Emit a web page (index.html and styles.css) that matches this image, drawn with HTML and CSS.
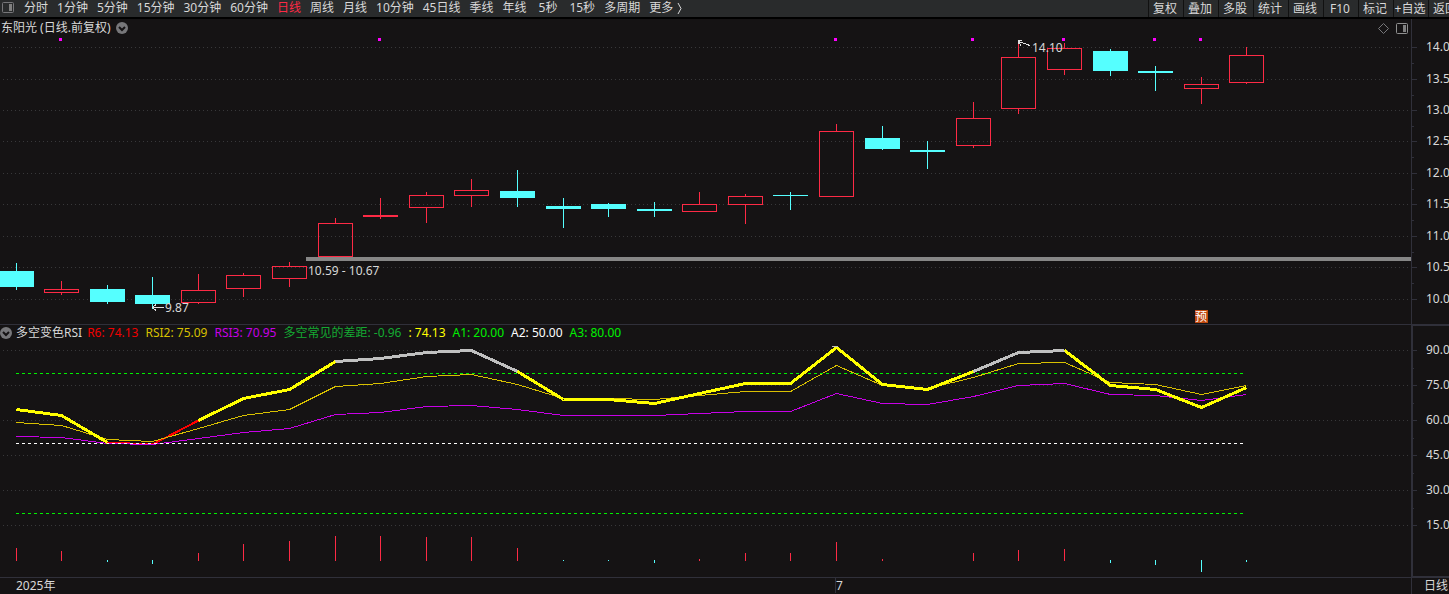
FILE: index.html
```html
<!DOCTYPE html>
<html lang="zh-CN">
<head>
    <meta charset="UTF-8">
    <meta name="viewport" content="width=device-width, initial-scale=1.0">
    <title>东阳光 日线</title>
    <link rel="stylesheet" href="styles.css">
</head>
<body>
    <header class="toolbar">
        <button class="icon-btn" aria-label="侧栏">
            <svg width="12" height="11" viewBox="0 0 12 11"><rect class="icon-line" x="0.5" y="0.5" width="11" height="10" rx="1"/><rect class="icon-fill" x="7" y="2" width="3" height="7"/></svg>
        </button>
        <nav class="periods">
            <button>分时</button>
            <button>1分钟</button>
            <button>5分钟</button>
            <button>15分钟</button>
            <button>30分钟</button>
            <button>60分钟</button>
            <button class="active">日线</button>
            <button>周线</button>
            <button>月线</button>
            <button>10分钟</button>
            <button>45日线</button>
            <button>季线</button>
            <button>年线</button>
            <button class="seconds">5秒</button>
            <button class="seconds">15秒</button>
            <button>多周期</button>
            <button>更多 <svg width="5" height="11" viewBox="0 0 5 11"><path class="more-line" d="M1 0L4 5.5L1 11"/></svg></button>
        </nav>
        <div class="tools">
            <button>复权</button>
            <button>叠加</button>
            <button>多股</button>
            <button>统计</button>
            <button>画线</button>
            <button>F10</button>
            <button>标记</button>
            <button>+自选</button>
            <button class="cut">返回</button>
        </div>
    </header>

    <main class="charts">
        <section class="panel price">
            <svg class="plot" id="pricePlot" viewBox="0 19 1411 305" preserveAspectRatio="xMinYMin meet"></svg>
            <div class="panel-head">
                <span>东阳光 (日线.前复权)</span>
                <button class="icon-btn" aria-label="展开">
                    <svg width="12" height="12" viewBox="0 0 12 12"><circle class="icon-disc" cx="6" cy="6" r="6"/><path class="chevron" d="M3 5L6 8L9 5"/></svg>
                </button>
                <div class="corner">
                    <button class="icon-btn" aria-label="标记点">
                        <svg width="11" height="11" viewBox="0 0 11 11"><path class="icon-line" d="M5.5 0.5L10.5 5.5L5.5 10.5L0.5 5.5Z"/></svg>
                    </button>
                    <button class="icon-btn" aria-label="右侧栏">
                        <svg width="12" height="11" viewBox="0 0 12 11"><rect class="icon-line bright" x="0.5" y="0.5" width="11" height="10" rx="1"/><rect class="icon-fill" x="7" y="2" width="3" height="7"/></svg>
                    </button>
                </div>
            </div>
        </section>
        <svg class="axis" id="priceAxis" viewBox="1411 19 38 305" preserveAspectRatio="xMinYMin meet"></svg>

        <section class="panel rsi">
            <svg class="plot" id="rsiPlot" viewBox="0 325 1411 252" preserveAspectRatio="xMinYMin meet"></svg>
            <div class="panel-head legend">
                <button class="icon-btn" aria-label="展开">
                    <svg width="12" height="12" viewBox="0 0 12 12"><circle class="icon-disc" cx="6" cy="6" r="6"/><path class="chevron" d="M3 5L6 8L9 5"/></svg>
                </button>
                <span>多空变色RSI</span>
                <div class="values">
                    <span class="c-red">R6: 74.13</span>
                    <span class="c-gold">RSI2: 75.09</span>
                    <span class="c-purple">RSI3: 70.95</span>
                    <span class="c-green">多空常见的差距: -0.96</span>
                    <span class="c-yellow">: 74.13</span>
                    <span class="c-lime">A1: 20.00</span>
                    <span class="c-white">A2: 50.00</span>
                    <span class="c-lime">A3: 80.00</span>
                </div>
            </div>
        </section>
        <svg class="axis" id="rsiAxis" viewBox="1411 324 38 254" preserveAspectRatio="xMinYMin meet"></svg>
    </main>

    <footer class="timeline">
        <svg class="dates" id="dates" viewBox="0 578 1411 16" preserveAspectRatio="xMinYMin meet"></svg>
        <span class="period-name">日线</span>
    </footer>

    <script src="script.js"></script>
</body>
</html>
```
FILE: styles.css
```css
* {
    box-sizing: border-box;
}

body {
    margin: 0;
    height: 100vh;
    display: flex;
    flex-direction: column;
    overflow: hidden;
    background: #151314;
    color: #d8d8d8;
    font: 12px/16px "Noto Sans", "Noto Sans CJK SC", sans-serif;
}

button {
    padding: 0;
    border: 0;
    background: none;
    color: inherit;
    font: inherit;
    white-space: nowrap;
    cursor: pointer;
}

button:hover {
    color: #ffffff;
}

svg {
    display: block;
}

/* toolbar */
.toolbar {
    display: flex;
    flex: none;
    height: 19px;
    padding-left: 2px;
    background: #292b2c;
    border-bottom: 2px solid #000000;
}

.icon-btn {
    display: flex;
    flex: none;
    align-items: center;
}

.toolbar .icon-btn {
    height: 15px;
}

.periods {
    display: flex;
    flex: 1;
    gap: 9px;
    padding-left: 10px;
    height: 16px;
}

.periods button {
    display: flex;
    align-items: center;
    gap: 4px;
    line-height: 16px;
}

.periods .seconds {
    padding-left: 3px;
}

.periods .active {
    color: #fd2a45;
}

.tools {
    display: flex;
    flex: none;
}

.tools button {
    width: 35px;
    height: 17px;
    padding-right: 2px;
    border-left: 1px solid #111111;
    line-height: 16px;
    overflow: hidden;
}

.tools .cut {
    width: 21px;
    padding-left: 4px;
    text-align: left;
}

.icon-line {
    fill: none;
    stroke: #77777a;
}

.bright {
    stroke: #909090;
}

.icon-fill {
    fill: #808080;
}

.icon-disc {
    fill: #77777a;
}

.chevron {
    fill: none;
    stroke: #151314;
    stroke-width: 2;
}

.more-line {
    fill: none;
    stroke: #d8d8d8;
}

/* chart panels */
.charts {
    flex: 1;
    display: grid;
    grid-template-columns: 1fr 38px;
    grid-template-rows: 305fr 254fr;
    min-height: 0;
}

.panel {
    display: grid;
    min-width: 0;
    min-height: 0;
}

.plot,
.panel-head {
    grid-area: 1 / 1;
}

.plot {
    width: 100%;
    height: 100%;
    min-height: 0;
}

.rsi {
    border-top: 1px solid #30303a;
    border-bottom: 1px solid #30303a;
}

.axis {
    width: 100%;
    height: 100%;
    min-height: 0;
}

.panel-head {
    display: flex;
    align-self: start;
    align-items: center;
    gap: 5px;
    height: 18px;
    padding: 0 3px 0 1px;
    white-space: nowrap;
}

.corner {
    display: flex;
    gap: 7px;
    margin-left: auto;
}

.legend {
    gap: 4px;
    height: 16px;
    padding-left: 0;
}

.values {
    display: flex;
    gap: 7px;
    padding-left: 1px;
}

.c-red { color: #f00000; }
.c-gold { color: #d8c000; }
.c-purple { color: #c800e6; }
.c-green { color: #14aa32; }
.c-yellow { color: #ffff00; }
.c-lime { color: #00f000; }
.c-white { color: #ffffff; }

.timeline {
    display: grid;
    grid-template-columns: 1fr 38px;
    flex: none;
    height: 16px;
}

.dates {
    width: 100%;
    height: 16px;
}

.period-name {
    padding-left: 12px;
    border-left: 1px solid #30303a;
    white-space: nowrap;
    line-height: 15px;
}

/* drawing */
.plot,
.axis,
.dates {
    shape-rendering: crispEdges;
}

.plot text,
.axis text,
.dates text {
    fill: #d8d8d8;
}

.grid {
    stroke: #38383a;
    stroke-dasharray: 1 3;
}

.frame { stroke: #30303a; }
.thick { stroke-width: 2; }

.level {
    stroke-dasharray: 3 3;
}

.s-lime { stroke: #00f000; }
.s-white { stroke: #ffffff; }
.up { fill: none; stroke: #fd2a45; }
.down { fill: #55ffff; stroke: #55ffff; }
.mark { fill: #ff00ff; }
.gap { fill: #868686; }
.peak { fill: #c0c0c0; }
.pointer { fill: none; stroke: #e0e0e0; }
.badge { fill: #c04a10; }
.plot .badge-text { fill: #ffffff; }

.line { fill: none; }
.line-gold { stroke: #d8c000; }
.line-purple { stroke: #c800e6; }
.line-yellow { stroke: #ffff00; stroke-width: 3; }
.line-silver { stroke: #c0c0c0; stroke-width: 3; }
.line-red { stroke: #ff0000; stroke-width: 2; }
```
FILE: script.js
```js
var xs = [16, 61, 107, 152, 198, 243, 289, 335, 380, 426, 471, 517, 563, 608, 654, 699, 745, 790, 836, 882, 927, 973, 1018, 1064, 1110, 1155, 1201, 1246];

// high, body top, body bottom, low, 1 = up
var candles = [
    [263, 271, 287, 290, 0], [281, 289, 293, 295, 1], [285, 289, 302, 304, 0], [277, 295, 304, 309, 0],
    [274, 290, 303, 304, 1], [273, 275, 289, 297, 1], [262, 266, 279, 287, 1], [218, 223, 257, 257, 1],
    [198, 215, 217, 219, 1], [192, 195, 208, 223, 1], [179, 190, 196, 207, 1], [170, 191, 198, 207, 0],
    [198, 206, 209, 228, 0], [203, 204, 209, 217, 0], [202, 209, 211, 217, 0], [192, 204, 212, 212, 1],
    [194, 196, 205, 224, 1], [192, 195, 196, 210, 0], [124, 131, 197, 197, 1], [126, 138, 149, 150, 0],
    [141, 150, 152, 169, 0], [102, 118, 146, 148, 1], [43, 57, 109, 114, 1], [43, 48, 70, 75, 1],
    [49, 51, 71, 76, 0], [66, 71, 73, 91, 0], [77, 84, 89, 104, 1], [47, 55, 83, 84, 1]
];

var fast = [409, 415, 442, 444, 420, 398, 389, 361, 358, 352, 350, 371, 399, 399, 403, 393, 383, 383, 347, 384, 389, 371, 352, 350, 385, 389, 407, 387];
var mid = [422, 425, 439, 441, 428, 415, 409, 386, 383, 376, 374, 384, 398, 398, 399, 395, 391, 391, 365, 385, 388, 377, 363, 362, 382, 384, 394, 385];
var slow = [436, 437, 443, 444, 438, 432, 428, 414, 412, 406, 405, 409, 415, 415, 415, 413, 411, 411, 393, 403, 404, 396, 385, 383, 394, 395, 400, 394];

// end of each bar, null = nothing drawn
var bars = [548, 551, 562, 564, 553, 544, 541, 536, 536, 537, 537, 548, 561, 561, 563, 559, 553, 553, 542, 559, null, 553, 550, 549, 563, 565, 572, 562];

function add(svg, tag, cls, attrs, text) {
    var el = document.createElementNS("http://www.w3.org/2000/svg", tag);
    el.setAttribute("class", cls);
    for (var key in attrs) {
        el.setAttribute(key, attrs[key]);
    }
    if (text) {
        el.textContent = text;
    }
    svg.appendChild(el);
}

function hline(svg, cls, x1, x2, y) {
    add(svg, "line", cls, { x1: x1, x2: x2, y1: y + 0.5, y2: y + 0.5 });
}

function vline(svg, cls, x, y1, y2) {
    if (y2 > y1) {
        add(svg, "line", cls, { x1: x + 0.5, x2: x + 0.5, y1: y1, y2: y2 });
    }
}

function curve(svg, cls, ys, from, to) {
    var points = [];
    for (var i = from; i <= to; i++) {
        points.push((xs[i] + 0.5) + "," + (ys[i] + 0.5));
    }
    add(svg, "polyline", "line " + cls, { points: points.join(" ") });
}

function label(svg, x, y, text) {
    add(svg, "text", "", { x: x, y: y }, text);
}

// price panel
var price = document.getElementById("pricePlot");
var priceAxis = document.getElementById("priceAxis");
var priceRows = [47, 79, 110, 141, 173, 204, 236, 267, 299];

vline(priceAxis, "frame", 1411, 19, 324);
priceRows.forEach(function (y, i) {
    hline(price, "grid", 3, 1409, y);
    hline(priceAxis, "frame", 1412, 1417, y);
    if (i < 8) {
        hline(priceAxis, "frame", 1412, 1414, y + 16);
    }
    label(priceAxis, 1426, y + 4, (14 - i * 0.5).toFixed(2));
});

candles.forEach(function (c, i) {
    var x = xs[i];
    var cls = c[4] ? "up" : "down";
    vline(price, cls, x, c[0], c[1]);
    vline(price, cls, x, c[2], c[3]);
    if (c[2] - c[1] === 1) {
        hline(price, cls, x - 17, x + 18, c[1]);
    } else {
        add(price, "rect", cls, { x: x - 16.5, y: c[1] + 0.5, width: 34, height: c[2] - c[1] - 1 });
    }
});

[1, 8, 18, 21, 23, 25, 26].forEach(function (i) {
    add(price, "rect", "mark", { x: xs[i] - 2, y: 38, width: 3, height: 3 });
});

add(price, "rect", "gap", { x: 306, y: 257, width: 1105, height: 4 });
label(price, 308, 275, "10.59 - 10.67");
add(price, "path", "pointer", { d: "M164 307.5H153M156 304.5L152.5 307.5L156 310.5" });
label(price, 165, 312, "9.87");
add(price, "path", "pointer", { d: "M1030 45.5L1018.5 41.5M1022 40.5H1018.5V44M1018.5 41.5L1021 45.5" });
label(price, 1032, 52, "14.10");
add(price, "rect", "badge", { x: 1195, y: 310, width: 13, height: 13 });
add(price, "text", "badge-text", { x: 1195, y: 321 }, "预");

// rsi panel
var rsi = document.getElementById("rsiPlot");
var rsiAxis = document.getElementById("rsiAxis");

add(rsiAxis, "path", "frame thick line", { d: "M1449 325H1412V577H1449" });
[350, 385, 420, 455, 490, 525].forEach(function (y, i) {
    hline(rsi, "grid", 3, 1409, y);
    hline(rsiAxis, "frame", 1413, 1417, y);
    if (i < 5) {
        hline(rsiAxis, "frame", 1413, 1414, y + 18);
    }
    label(rsiAxis, 1426, y + 4, (90 - i * 15).toFixed(2));
});

curve(rsi, "line-red", fast, 2, 4);
curve(rsi, "line-gold", mid, 0, 27);
curve(rsi, "line-purple", slow, 0, 27);
hline(rsi, "level s-lime", 16, 1244, 373);
hline(rsi, "level s-white", 16, 1244, 443);
hline(rsi, "level s-lime", 16, 1244, 513);
curve(rsi, "line-yellow", fast, 0, 2);
curve(rsi, "line-yellow", fast, 4, 7);
curve(rsi, "line-yellow", fast, 11, 21);
curve(rsi, "line-yellow", fast, 23, 27);
curve(rsi, "line-silver", fast, 7, 11);
curve(rsi, "line-silver", fast, 21, 23);
add(rsi, "rect", "peak", { x: 832, y: 346, width: 6, height: 1 });

bars.forEach(function (y, i) {
    if (y === null) {
        return;
    }
    if (y < 560) {
        vline(rsi, "up", xs[i], y, 561);
    } else {
        vline(rsi, "down", xs[i], 560, y);
    }
});

// dates
var dates = document.getElementById("dates");
label(dates, 16, 590, "2025年");
vline(dates, "frame", 835, 578, 593);
label(dates, 836, 590, "7");
```
